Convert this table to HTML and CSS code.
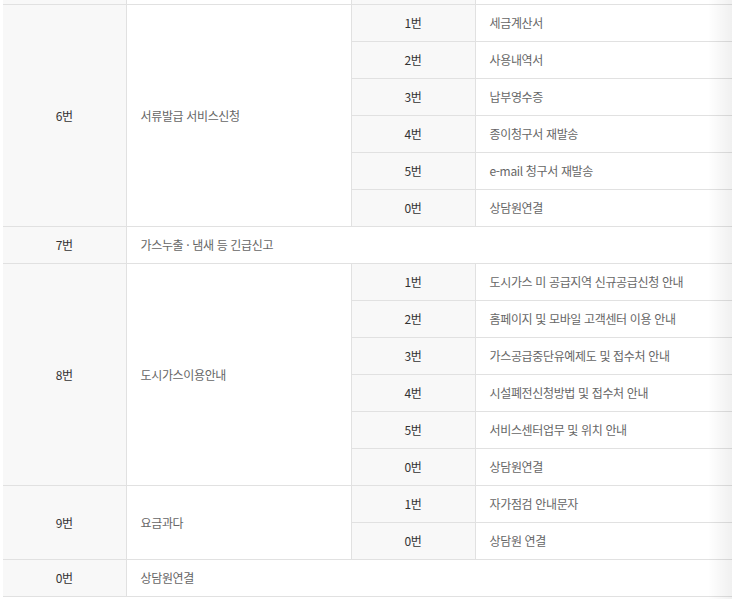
FILE: index.html
```html
<!DOCTYPE html>
<html lang="ko">
<head>
<meta charset="utf-8">
<link rel="stylesheet" href="styles.css">
</head>
<body>
<div class="scroller">
  <table class="ars">
    <colgroup>
      <col class="c1"><col class="c2"><col class="c3"><col class="c4">
    </colgroup>
    <tbody>
      <tr class="prev">
        <td class="num main"></td>
        <td class="txt"></td>
        <td class="num sub"></td>
        <td class="txt"></td>
      </tr>

      <tr>
        <td class="num main" rowspan="6">6번</td>
        <td class="txt" rowspan="6">서류발급 서비스신청</td>
        <td class="num sub">1번</td>
        <td class="txt">세금계산서</td>
      </tr>
      <tr><td class="num sub">2번</td><td class="txt">사용내역서</td></tr>
      <tr><td class="num sub">3번</td><td class="txt">납부영수증</td></tr>
      <tr><td class="num sub">4번</td><td class="txt">종이청구서 재발송</td></tr>
      <tr><td class="num sub">5번</td><td class="txt">e-mail 청구서 재발송</td></tr>
      <tr><td class="num sub">0번</td><td class="txt">상담원연결</td></tr>

      <tr>
        <td class="num main">7번</td>
        <td class="txt" colspan="3">가스누출 · 냄새 등 긴급신고</td>
      </tr>

      <tr>
        <td class="num main" rowspan="6">8번</td>
        <td class="txt" rowspan="6">도시가스이용안내</td>
        <td class="num sub">1번</td>
        <td class="txt">도시가스 미 공급지역 신규공급신청 안내</td>
      </tr>
      <tr><td class="num sub">2번</td><td class="txt">홈페이지 및 모바일 고객센터 이용 안내</td></tr>
      <tr><td class="num sub">3번</td><td class="txt">가스공급중단유예제도 및 접수처 안내</td></tr>
      <tr><td class="num sub">4번</td><td class="txt">시설폐전신청방법 및 접수처 안내</td></tr>
      <tr><td class="num sub">5번</td><td class="txt">서비스센터업무 및 위치 안내</td></tr>
      <tr><td class="num sub">0번</td><td class="txt">상담원연결</td></tr>

      <tr>
        <td class="num main" rowspan="2">9번</td>
        <td class="txt" rowspan="2">요금과다</td>
        <td class="num sub">1번</td>
        <td class="txt">자가점검 안내문자</td>
      </tr>
      <tr><td class="num sub">0번</td><td class="txt">상담원 연결</td></tr>

      <tr>
        <td class="num main">0번</td>
        <td class="txt" colspan="3">상담원연결</td>
      </tr>
    </tbody>
  </table>
  <div class="shade"></div>
</div>
</body>
</html>
```

FILE: styles.css
```css
html, body {
  margin: 0;
  padding: 0;
  background: #fff;
}

body {
  font-family: "Noto Sans CJK KR", "Noto Sans", sans-serif;
  font-size: 12px;
  letter-spacing: -0.35px;
}

.scroller {
  position: relative;
  width: 732px;
  height: 599px;
  overflow: hidden;
  padding-left: 3px;
  box-sizing: border-box;
}

.ars {
  width: 760px;
  table-layout: fixed;
  border-collapse: collapse;
  margin-top: -33px;
}

.c1 { width: 123px; }
.c2 { width: 225px; }
.c3 { width: 124px; }
.c4 { width: auto; }

.ars td {
  height: 36px;
  padding: 0;
  border: 1px solid #e1e1e1;
  vertical-align: middle;
  line-height: 16px;
}

.ars tr > td:first-child {
  border-left: none;
}

.num {
  background: #f8f8f8;
  color: #333;
  text-align: center;
}

.txt {
  background: #fff;
  color: #666;
  padding-left: 14px !important;
  text-align: left;
}

.shade {
  position: absolute;
  top: 0;
  right: 0;
  width: 24px;
  height: 100%;
  background: linear-gradient(to right, rgba(0, 0, 0, 0), rgba(0, 0, 0, 0.06));
  pointer-events: none;
}
```
